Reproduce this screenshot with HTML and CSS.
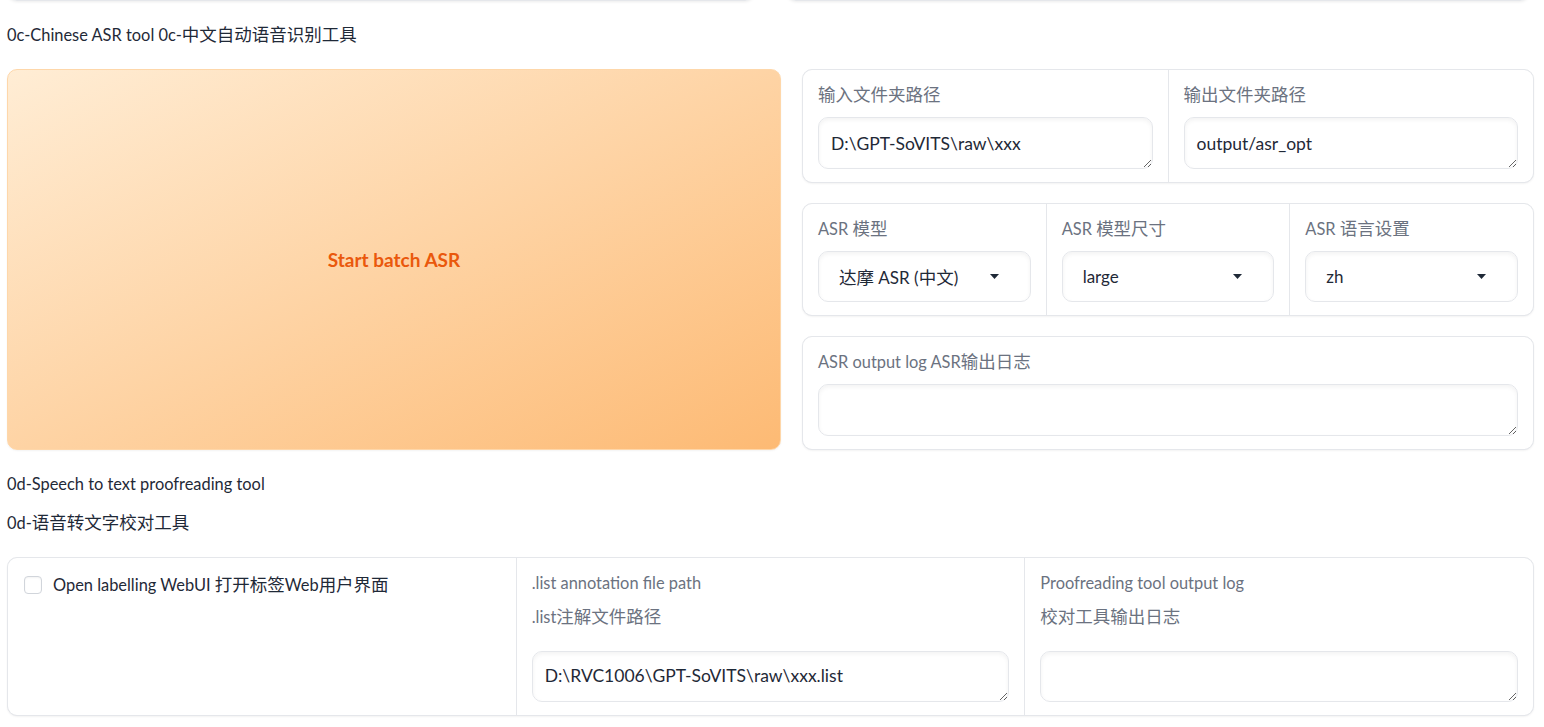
FILE: index.html
```html
<!DOCTYPE html>
<html lang="zh">
<head>
<meta charset="utf-8">
<title>ASR tools</title>
<link rel="stylesheet" href="styles.css">
</head>
<body>
<div class="page">
  <div class="prev-row">
    <div class="prev-box prev-left"></div>
    <div class="prev-box prev-right"></div>
  </div>

  <div class="md md-1">0c-Chinese ASR tool 0c-<span class="zh">中文自动语音识别工具</span></div>

  <div class="row">
    <button class="primary-btn">Start batch ASR</button>
    <div class="col">
      <div class="group g2 h114">
        <div class="field">
          <span class="label"><span class="zh">输入文件夹路径</span></span>
          <textarea class="ta" readonly>D:\GPT-SoVITS\raw\xxx</textarea>
        </div>
        <div class="field">
          <span class="label"><span class="zh">输出文件夹路径</span></span>
          <textarea class="ta" readonly>output/asr_opt</textarea>
        </div>
      </div>
      <div class="group g3 h113">
        <div class="field">
          <span class="label">ASR <span class="zh">模型</span></span>
          <div class="dd"><span><span class="zh">达摩</span> ASR (<span class="zh">中文</span>)</span><svg class="caret" width="9" height="5" viewBox="0 0 9 5"><path d="M0 0H9L4.5 5Z"/></svg></div>
        </div>
        <div class="field">
          <span class="label">ASR <span class="zh">模型尺寸</span></span>
          <div class="dd"><span>large</span><svg class="caret" width="9" height="5" viewBox="0 0 9 5"><path d="M0 0H9L4.5 5Z"/></svg></div>
        </div>
        <div class="field">
          <span class="label">ASR <span class="zh">语言设置</span></span>
          <div class="dd"><span>zh</span><svg class="caret" width="9" height="5" viewBox="0 0 9 5"><path d="M0 0H9L4.5 5Z"/></svg></div>
        </div>
      </div>
      <div class="group g1 h114">
        <div class="field">
          <span class="label">ASR output log ASR<span class="zh">输出日志</span></span>
          <textarea class="ta" readonly></textarea>
        </div>
      </div>
    </div>
  </div>

  <div class="md md-2">0d-Speech to text proofreading tool</div>
  <div class="md md-3">0d-<span class="zh">语音转文字校对工具</span></div>

  <div class="group g3 bottom">
    <div class="field field-check">
      <label class="check-row"><span class="cb"></span><span>Open labelling WebUI <span class="zh">打开标签</span>Web<span class="zh">用户界面</span></span></label>
    </div>
    <div class="field">
      <span class="label label-a">.list annotation file path</span>
      <span class="label label-b">.list<span class="zh">注解文件路径</span></span>
      <textarea class="ta ta-b" readonly>D:\RVC1006\GPT-SoVITS\raw\xxx.list</textarea>
    </div>
    <div class="field">
      <span class="label label-a">Proofreading tool output log</span>
      <span class="label label-b"><span class="zh">校对工具输出日志</span></span>
      <textarea class="ta ta-b" readonly></textarea>
    </div>
  </div>
</div>
</body>
</html>
```

FILE: styles.css
```css
* { box-sizing: border-box; }

body {
  margin: 0;
  background: #ffffff;
  font-family: "Lato", "Noto Sans CJK SC", sans-serif;
  font-size: 16.4px;
  color: #1f2937;
}

.zh {
  font-family: "Noto Sans CJK SC", sans-serif;
  font-size: 17.5px;
}

.page {
  width: 1544px;
  height: 727px;
  padding: 0 10px 0 7px;
  overflow: hidden;
}

.prev-row {
  display: flex;
  gap: 31px;
  margin-top: -39px;
}
.prev-box {
  height: 40px;
  border: 1px solid #e5e7eb;
  border-radius: 10px;
  box-shadow: 0 1px 3px rgba(0, 0, 0, 0.08);
}
.prev-left { width: 748px; }
.prev-right { width: 744px; }

.md {
  line-height: 28px;
  height: 28px;
  margin-top: 20px;
}
.md-1 { margin-top: 19px; }
.md-3 { margin-top: 10px; }

.row {
  display: grid;
  grid-template-columns: 774px 732px;
  column-gap: 21px;
  margin-top: 21px;
  height: 381px;
}

.primary-btn {
  border: 1px solid #fed7aa;
  border-radius: 10px;
  background: linear-gradient(to bottom right, #ffedd5, #fdba74);
  color: #ea580c;
  font-family: "Lato", "Noto Sans CJK SC", sans-serif;
  font-weight: 700;
  font-size: 19px;
  box-shadow: 0 1px 2px rgba(0, 0, 0, 0.05);
  padding: 0;
}

.col {
  display: flex;
  flex-direction: column;
  gap: 20px;
}

.group {
  display: grid;
  gap: 1px;
  background: #e5e7eb;
  border: 1px solid #e5e7eb;
  border-radius: 10px;
  overflow: hidden;
  box-shadow: 0 1px 2px rgba(0, 0, 0, 0.05);
}
.g1 { grid-template-columns: 1fr; }
.g2 { grid-template-columns: 1fr 1fr; }
.g3 { grid-template-columns: 1fr 1fr 1fr; }
.h114 { height: 114px; }
.h113 { height: 113px; }

.field {
  background: #ffffff;
  padding: 13px 15px;
}

.label {
  display: block;
  height: 22px;
  color: #6b7280;
  line-height: 22px;
  margin-bottom: 12px;
}
.label-a { margin-top: 1px; margin-bottom: 11px; }
.label-b { margin-bottom: 24px; }

.ta {
  display: block;
  width: 100%;
  height: 52px;
  margin: 0;
  border: 1px solid #e5e7eb;
  border-radius: 10px;
  background: #ffffff;
  box-shadow: inset 0 2px 4px rgba(0, 0, 0, 0.05);
  padding: 15px 12px 13px;
  font-family: "Lato", "Noto Sans CJK SC", sans-serif;
  font-size: 17.5px;
  line-height: 22px;
  color: #1f2937;
  resize: vertical;
  outline: none;
  overflow: hidden;
}
.ta-b { height: 51px; padding-top: 13px; }

.dd {
  display: flex;
  align-items: center;
  justify-content: space-between;
  height: 51px;
  border: 1px solid #e5e7eb;
  border-radius: 10px;
  box-shadow: inset 0 2px 4px rgba(0, 0, 0, 0.05);
  padding: 0 31px 0 20px;
  font-size: 17px;
  color: #1f2937;
}
.caret { fill: #1f2937; }

.bottom {
  margin-top: 21px;
  height: 159px;
}

.field-check { padding: 15px 16px 16px; }
.check-row {
  display: flex;
  align-items: center;
  gap: 11px;
  line-height: 22px;
}
.cb {
  width: 18px;
  height: 18px;
  flex: none;
  border: 1px solid #d1d5db;
  border-radius: 4px;
  background: #ffffff;
  box-shadow: inset 0 1px 2px rgba(0, 0, 0, 0.05);
}
```
